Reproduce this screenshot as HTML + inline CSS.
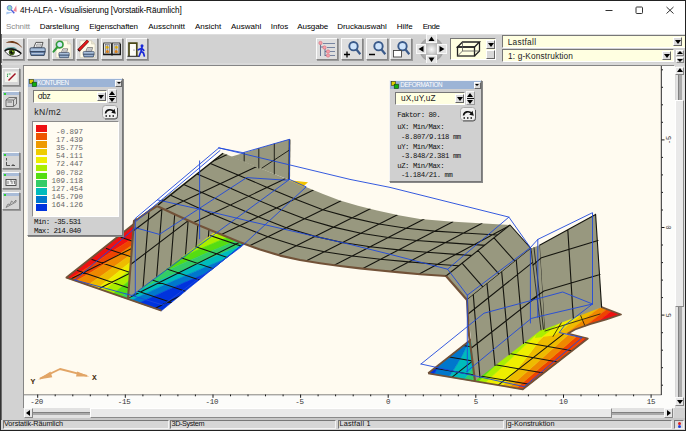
<!DOCTYPE html>
<html><head><meta charset="utf-8"><title>4H-ALFA - Visualisierung</title>
<style>
*{box-sizing:border-box;margin:0;padding:0}
html,body{width:686px;height:431px;overflow:hidden;background:#d2d2d2;font-family:"Liberation Sans",sans-serif;}
#w{position:absolute;left:0;top:0;width:686px;height:431px;overflow:hidden;background:#d2d2d2}
.abs{position:absolute}
#title{position:absolute;left:0;top:0;width:686px;height:21px;background:#fff;border-top:1px solid #444}
#title .t{position:absolute;left:20px;top:3px;font-size:12px;color:#000;letter-spacing:-0.1px;white-space:nowrap}
#menu{position:absolute;left:0;top:21px;width:686px;height:13px;background:#fff}
#menu span{position:absolute;top:-2px;font-size:11.5px;color:#000;white-space:nowrap;letter-spacing:-0.1px}
.btn{position:absolute;background:#dedede;border:1px solid;border-color:#fbfbfb #858585 #858585 #fbfbfb;box-shadow:1px 1px 0 #9a9a9a}
.fld{position:absolute;background:#ffffe1;border:1px solid;border-color:#777 #fff #fff #777;font-size:10.5px;color:#222;white-space:nowrap}
.panel{position:absolute;background:#d0d0d0;border:1px solid;border-color:#f4f4f4 #777 #777 #f4f4f4;box-shadow:1px 1px 0 #888}
.ptitle{position:absolute;left:0;top:0;right:0;height:10px;background:#9db5d6;color:#fff;font-size:8px;line-height:10px;white-space:nowrap;font-family:"Liberation Sans",sans-serif}
.mono{font-family:"Liberation Mono",monospace;white-space:pre;color:#222}
.sm{font-family:"Liberation Sans",sans-serif;white-space:pre;color:#222}
.dd{position:absolute;width:10px;height:9px;background:#dcdcdc;border:1px solid;border-color:#fff #666 #666 #fff}
.tri-d{position:absolute;width:0;height:0;border-left:3px solid transparent;border-right:3px solid transparent;border-top:4px solid #000}
.tri-u{position:absolute;width:0;height:0;border-left:3px solid transparent;border-right:3px solid transparent;border-bottom:4px solid #000}
.tri-l{position:absolute;width:0;height:0;border-top:3px solid transparent;border-bottom:3px solid transparent;border-right:4px solid #000}
.tri-r{position:absolute;width:0;height:0;border-top:3px solid transparent;border-bottom:3px solid transparent;border-left:4px solid #000}
</style></head>
<body><div id="w"><div id="title"><svg class="abs" style="left:0;top:-1px" width="20" height="20" viewBox="0 0 20 20">
<path d="M6.200 14.600 L6.500 11.800 L12.800 12.300 Z" fill="#a8c8f0"/>
<path d="M16.300 5.300 L13.200 11 L16.700 11.700 Z" fill="#f08494"/>
<path d="M11 9.600 L14.300 13.300" stroke="#4a5ad8" stroke-width="1.400"/>
<circle cx="9.600" cy="7.900" r="2.400" fill="#8fd8c0" stroke="#6a8ad8" stroke-width="1"/></svg></div><div class="abs" style="left:20.00px;top:6.10px;font-family:'Liberation Sans',sans-serif;font-weight:normal;font-size:8.2px;line-height:10.2px;letter-spacing:-0.095px;color:#000;white-space:pre;">4H-ALFA - Visualisierung [Vorstatik-Räumlich]</div><svg class="abs" style="left:596px;top:0" width="90" height="21" viewBox="0 0 90 21">
<path d="M9.500 10.500 H16.500" stroke="#333" stroke-width="1" fill="none"/>
<rect x="40" y="7" width="6.500" height="6.500" rx="0.800" stroke="#333" stroke-width="1" fill="none"/>
<path d="M70.500 7 L77.500 13.500 M77.500 7 L70.500 13.500" stroke="#333" stroke-width="1" fill="none"/></svg><div class="abs" style="left:0;top:20px;width:686px;height:14px;background:#fff"></div><div class="abs" style="left:6.00px;top:22.40px;font-family:'Liberation Sans',sans-serif;font-weight:normal;font-size:8px;line-height:10px;letter-spacing:-0.076px;color:#8a8a8a;white-space:pre;">Schnitt</div><div class="abs" style="left:39.70px;top:22.40px;font-family:'Liberation Sans',sans-serif;font-weight:normal;font-size:8px;line-height:10px;letter-spacing:-0.086px;color:#000;white-space:pre;">Darstellung</div><div class="abs" style="left:89.30px;top:22.40px;font-family:'Liberation Sans',sans-serif;font-weight:normal;font-size:8px;line-height:10px;letter-spacing:-0.167px;color:#000;white-space:pre;">Eigenschaften</div><div class="abs" style="left:148.30px;top:22.40px;font-family:'Liberation Sans',sans-serif;font-weight:normal;font-size:8px;line-height:10px;letter-spacing:-0.023px;color:#000;white-space:pre;">Ausschnitt</div><div class="abs" style="left:195.00px;top:22.40px;font-family:'Liberation Sans',sans-serif;font-weight:normal;font-size:8px;line-height:10px;letter-spacing:0.011px;color:#000;white-space:pre;">Ansicht</div><div class="abs" style="left:231.00px;top:22.40px;font-family:'Liberation Sans',sans-serif;font-weight:normal;font-size:8px;line-height:10px;letter-spacing:0.010px;color:#000;white-space:pre;">Auswahl</div><div class="abs" style="left:270.70px;top:22.40px;font-family:'Liberation Sans',sans-serif;font-weight:normal;font-size:8px;line-height:10px;letter-spacing:0.064px;color:#000;white-space:pre;">Infos</div><div class="abs" style="left:297.30px;top:22.40px;font-family:'Liberation Sans',sans-serif;font-weight:normal;font-size:8px;line-height:10px;letter-spacing:-0.097px;color:#000;white-space:pre;">Ausgabe</div><div class="abs" style="left:337.30px;top:22.40px;font-family:'Liberation Sans',sans-serif;font-weight:normal;font-size:8px;line-height:10px;letter-spacing:-0.076px;color:#000;white-space:pre;">Druckauswahl</div><div class="abs" style="left:396.70px;top:22.40px;font-family:'Liberation Sans',sans-serif;font-weight:normal;font-size:8px;line-height:10px;letter-spacing:-0.001px;color:#000;white-space:pre;">Hilfe</div><div class="abs" style="left:422.70px;top:22.40px;font-family:'Liberation Sans',sans-serif;font-weight:normal;font-size:8px;line-height:10px;letter-spacing:-0.461px;color:#000;white-space:pre;">Ende</div><div class="abs" style="left:0;top:34px;width:686px;height:1px;background:#dedede"></div><div class="abs" style="left:0;top:34px;width:1.500px;height:397px;background:#6a6a6a"></div><div class="btn" style="left:2px;top:38px;width:22px;height:22px"><svg class="abs" style="left:-1px;top:-1px" width="22" height="22" viewBox="0 0 22 22"><path d="M3.600 5 C6.500 2.400 11.500 2.200 15 4.600 C17.500 6.300 19.300 8.200 20.300 10 C18 7.800 15.500 6.200 12.500 5.300 C9.500 4.400 6.500 4.700 3.600 5 Z" fill="#6e3a18"/>
<path d="M2.600 11.500 C5 9.200 9 8.700 13 9.400 L15.500 11.500 C11 10.200 6.500 10.500 2.600 12.600 Z" fill="#6aa8a8"/>
<path d="M2.700 12.800 C6 10 13 9.800 19.200 15.500 C17.500 18.400 12 19 8 17.500 C5.500 16.500 3.800 14.500 2.700 12.800 Z" fill="#fbfbfb" stroke="#222" stroke-width="0.900"/>
<circle cx="9.800" cy="14.200" r="3" fill="#3c5a14"/><circle cx="9.800" cy="14.200" r="1.500" fill="#0a0a0a"/><circle cx="10.800" cy="13.400" r="0.900" fill="#8ab820"/>
<path d="M2.700 12.800 C6 10 13 9.800 19.200 15.500" fill="none" stroke="#111" stroke-width="1.500"/>
</svg></div><div class="btn" style="left:27px;top:38px;width:22px;height:22px"><svg class="abs" style="left:-1px;top:-1px" width="22" height="22" viewBox="0 0 22 22"><g transform="translate(0.5,0) scale(1.0)"><path d="M8.400 4.400 H15.500 L13.900 9.800 H6.200 Z" fill="#fafafa" stroke="#333" stroke-width="0.800"/>
<path d="M9.500 6 H13.800 L13 8.300 H8.600 Z" fill="#d8d8d8" stroke="#777" stroke-width="0.500"/>
<path d="M3.600 9.800 H16.800 Q17.700 9.800 17.700 11 V13.700 H2.500 V11 Q2.500 9.800 3.600 9.800 Z" fill="#a9c0dc" stroke="#2a3850" stroke-width="0.800"/>
<path d="M2.500 13.700 H17.700 L16.600 17.500 H3.600 Z" fill="#6a88b0" stroke="#2a3850" stroke-width="0.800"/>
<path d="M4 15.600 H16" stroke="#dfe8f4" stroke-width="0.700"/></g></svg></div><div class="btn" style="left:51.5px;top:38px;width:22px;height:22px"><svg class="abs" style="left:-1px;top:-1px" width="22" height="22" viewBox="0 0 22 22"><path d="M4 2.700 H15.500 L19 6 V19.700 H4 Z" fill="#fffbe8" stroke="#c8c4b0" stroke-width="0.600"/><path d="M15.500 2.700 V6 H19" fill="#e8e4d0" stroke="#c8c4b0" stroke-width="0.500"/><g transform="translate(5.2,7.8) scale(0.68)"><path d="M8.400 4.400 H15.500 L13.900 9.800 H6.200 Z" fill="#fafafa" stroke="#333" stroke-width="0.800"/>
<path d="M9.500 6 H13.800 L13 8.300 H8.600 Z" fill="#d8d8d8" stroke="#777" stroke-width="0.500"/>
<path d="M3.600 9.800 H16.800 Q17.700 9.800 17.700 11 V13.700 H2.500 V11 Q2.500 9.800 3.600 9.800 Z" fill="#a9c0dc" stroke="#2a3850" stroke-width="0.800"/>
<path d="M2.500 13.700 H17.700 L16.600 17.500 H3.600 Z" fill="#6a88b0" stroke="#2a3850" stroke-width="0.800"/>
<path d="M4 15.600 H16" stroke="#dfe8f4" stroke-width="0.700"/></g><circle cx="7.700" cy="6.600" r="3.300" fill="#d4e8fb" stroke="#2f9a3a" stroke-width="1.600"/>
<path d="M5.300 9.200 L1.500 13.600" stroke="#2f9a3a" stroke-width="2.100" stroke-linecap="round"/></svg></div><div class="btn" style="left:76px;top:38px;width:22px;height:22px"><svg class="abs" style="left:-1px;top:-1px" width="22" height="22" viewBox="0 0 22 22"><path d="M4 2.700 H15.500 L19 6 V19.700 H4 Z" fill="#fffbe8" stroke="#c8c4b0" stroke-width="0.600"/><path d="M15.500 2.700 V6 H19" fill="#e8e4d0" stroke="#c8c4b0" stroke-width="0.500"/><g transform="translate(5.4,6.4) scale(0.72)"><path d="M8.400 4.400 H15.500 L13.900 9.800 H6.200 Z" fill="#fafafa" stroke="#333" stroke-width="0.800"/>
<path d="M9.500 6 H13.800 L13 8.300 H8.600 Z" fill="#d8d8d8" stroke="#777" stroke-width="0.500"/>
<path d="M3.600 9.800 H16.800 Q17.700 9.800 17.700 11 V13.700 H2.500 V11 Q2.500 9.800 3.600 9.800 Z" fill="#a9c0dc" stroke="#2a3850" stroke-width="0.800"/>
<path d="M2.500 13.700 H17.700 L16.600 17.500 H3.600 Z" fill="#6a88b0" stroke="#2a3850" stroke-width="0.800"/>
<path d="M4 15.600 H16" stroke="#dfe8f4" stroke-width="0.700"/></g><path d="M2.400 12.600 L12 2.800" stroke="#4a0a0a" stroke-width="3"/><path d="M3 12 L12 2.800" stroke="#e81818" stroke-width="2"/>
<path d="M1.800 13.300 L3.800 12.600 L2.600 11.400 Z" fill="#111"/></svg></div><div class="btn" style="left:101px;top:38px;width:22px;height:22px"><svg class="abs" style="left:-1px;top:-1px" width="22" height="22" viewBox="0 0 22 22"><path d="M2 5.800 H20 V17.300 H11.800 L11 18 L10.200 17.300 H2 Z" fill="#1a1a1a"/>
<rect x="2.700" y="5" width="7.600" height="11" fill="#fdfdf6" stroke="#1a1a1a" stroke-width="0.800"/>
<rect x="11.300" y="5" width="7.600" height="11" fill="#fdfdf6" stroke="#1a1a1a" stroke-width="0.800"/>
<rect x="4.300" y="6.200" width="4.300" height="8.800" fill="#c4cce0" stroke="#555" stroke-width="0.500"/>
<rect x="13" y="6.200" width="4.300" height="8.800" fill="#c4cce0" stroke="#555" stroke-width="0.500"/>
<circle cx="6.200" cy="9.200" r="1.500" fill="#ffc400"/><circle cx="6.400" cy="13.400" r="1.500" fill="#ff8a00"/>
<circle cx="15.400" cy="9.200" r="1.500" fill="#ffc400"/><circle cx="15.200" cy="13.400" r="1.500" fill="#ff8a00"/>
<path d="M6.400 7 V15 M15.200 7 V15" stroke="#666" stroke-width="0.500"/></svg></div><div class="btn" style="left:126px;top:38px;width:22px;height:22px"><svg class="abs" style="left:-1px;top:-1px" width="22" height="22" viewBox="0 0 22 22"><path d="M3 18 V5.200 H10.800 V18" fill="#fcfcf8" stroke="#4a4818" stroke-width="1.700"/>
<path d="M1.500 18.300 H13.500" stroke="#222" stroke-width="1"/><circle cx="8" cy="12" r="0.600" fill="#555"/>
<circle cx="16" cy="7.800" r="1.500" fill="#1a2ad8"/>
<path d="M16 9.300 L15 13.300 L13.300 17.800 M15 13.300 L17.500 15 L18.300 18 M15.600 10.300 L12.300 11.800 M15.800 10.300 L17.800 12.300" stroke="#1a2ad8" stroke-width="1.700" fill="none" stroke-linecap="round" stroke-linejoin="round"/></svg></div><div class="btn" style="left:316px;top:38px;width:22px;height:22px"><svg class="abs" style="left:0;top:0" width="20" height="20" viewBox="0 0 20 20">
<path d="M3.500 4 V17 M8 8 V17 M8 12.500 H11 M8 16.500 H11 M3.500 8 H7" stroke="#5a6a8a" stroke-width="0.900" fill="none"/>
<path d="M6 4.500 H18 M10 8.500 H18 M13 12.500 H18 M13 16.500 H18" stroke="#6a7a9a" stroke-width="0.900"/>
<circle cx="3.500" cy="4" r="1.700" fill="#f8a0a8" stroke="#d06070" stroke-width="0.500"/>
<circle cx="7.500" cy="8.500" r="1.700" fill="#f8a0a8" stroke="#d06070" stroke-width="0.500"/>
<circle cx="11" cy="12.500" r="1.700" fill="#f8a0a8" stroke="#d06070" stroke-width="0.500"/>
<circle cx="11" cy="16.500" r="1.700" fill="#f8a0a8" stroke="#d06070" stroke-width="0.500"/></svg></div><div class="btn" style="left:341px;top:38px;width:22px;height:22px"><svg class="abs" style="left:0;top:0" width="20" height="20" viewBox="0 0 20 20"><circle cx="11.500" cy="7.200" r="4.200" fill="#cfe4fb" stroke="#3a5a8a" stroke-width="1.900"/><path d="M14.500 10.500 L18.300 15.200" stroke="#3a5a8a" stroke-width="2.200"/><path d="M2 15.500 H8 M5 12.500 V18.500" stroke="#000" stroke-width="1.300"/></svg></div><div class="btn" style="left:365.5px;top:38px;width:22px;height:22px"><svg class="abs" style="left:0;top:0" width="20" height="20" viewBox="0 0 20 20"><circle cx="11.500" cy="7.200" r="4.200" fill="#cfe4fb" stroke="#3a5a8a" stroke-width="1.900"/><path d="M14.500 10.500 L18.300 15.200" stroke="#3a5a8a" stroke-width="2.200"/><path d="M2 15.500 H8" stroke="#000" stroke-width="1.500"/></svg></div><div class="btn" style="left:390px;top:38px;width:22px;height:22px"><svg class="abs" style="left:0;top:0" width="20" height="20" viewBox="0 0 20 20"><circle cx="11.500" cy="7.200" r="4.200" fill="#cfe4fb" stroke="#3a5a8a" stroke-width="1.900"/><path d="M14.500 10.500 L18.300 15.200" stroke="#3a5a8a" stroke-width="2.200"/><rect x="2.500" y="11.500" width="8" height="6.500" fill="#fff" stroke="#444" stroke-width="0.900"/></svg></div><svg class="abs" style="left:415.500px;top:34px" width="32" height="31" viewBox="0 0 32 31">
<defs><radialGradient id="ng" cx="50%" cy="50%" r="50%"><stop offset="0" stop-color="#fafafa"/><stop offset="0.450" stop-color="#c4c4c4"/><stop offset="1" stop-color="#9c9c9c"/></radialGradient></defs>
<circle cx="15.500" cy="15.500" r="12" fill="url(#ng)"/>
<rect x="10.500" y="0.500" width="10" height="8" fill="#e4e4e4" stroke="#f8f8f8" stroke-width="1"/>
<rect x="10.500" y="21.500" width="10" height="8" fill="#e4e4e4" stroke="#f8f8f8" stroke-width="1"/>
<rect x="0.500" y="10.500" width="9" height="9" fill="#e4e4e4" stroke="#f8f8f8" stroke-width="1"/>
<rect x="21.500" y="10.500" width="9" height="9" fill="#e4e4e4" stroke="#f8f8f8" stroke-width="1"/>
<path d="M15.500 2.500 L18.500 7 H12.500 Z" fill="#000"/><path d="M15.500 28 L18.500 23.500 H12.500 Z" fill="#000"/>
<path d="M2.500 15 L7.500 12 V18 Z" fill="#000"/><path d="M28.500 15 L23.500 12 V18 Z" fill="#000"/>
</svg><div class="fld" style="left:450px;top:38px;width:46px;height:22px"></div>
<svg class="abs" style="left:452px;top:39px" width="32" height="20" viewBox="0 0 32 20">
<g fill="none" stroke="#222" stroke-width="1.300">
<path d="M5.500 8 L10.500 3 H27.500 L22.500 8 Z"/><rect x="5.500" y="8" width="17" height="9"/>
<path d="M27.500 3 V12 L22.500 17"/></g>
<g fill="none" stroke="#555" stroke-width="0.800"><path d="M10.500 3 V12 H27.500 M10.500 12 L5.500 17"/></g></svg>
<div class="dd" style="left:486px;top:40px;height:9px;width:9px"></div><div class="tri-d" style="left:487.500px;top:43px"></div>
<div class="dd" style="left:486px;top:50px;height:9px;width:9px;background:#d8d8d8"></div><div class="fld" style="left:502px;top:35px;width:184px;height:13px"></div><div class="abs" style="left:507.70px;top:36.65px;font-family:'Liberation Sans',sans-serif;font-weight:normal;font-size:8.3px;line-height:10.3px;letter-spacing:0.286px;color:#222;white-space:pre;">Lastfall</div><div class="dd" style="left:673px;top:37px;width:9px"></div><div class="tri-d" style="left:674.500px;top:40px"></div><div class="fld" style="left:502px;top:49px;width:172px;height:13px"></div><div class="abs" style="left:508.00px;top:50.65px;font-family:'Liberation Sans',sans-serif;font-weight:normal;font-size:8.3px;line-height:10.3px;letter-spacing:0.141px;color:#222;white-space:pre;">1: g-Konstruktion</div><div class="dd" style="left:662px;top:51px;width:9px"></div><div class="tri-d" style="left:663.500px;top:54px"></div><div class="dd" style="left:675.500px;top:49.500px;height:6.500px;width:8.500px;border-color:#fff #888 #888 #fff"></div><div class="tri-u" style="left:677px;top:50.500px;border-bottom-width:3.500px"></div><div class="dd" style="left:675.500px;top:56.500px;height:6.500px;width:8.500px;border-color:#fff #888 #888 #fff"></div><div class="tri-d" style="left:677px;top:58.500px;border-top-width:3.500px"></div><div class="abs" style="left:23px;top:64.500px;width:1.200px;height:343.500px;background:#858585"></div><div class="abs" style="left:23px;top:64.500px;width:651px;height:1.200px;background:#858585"></div><div class="abs" style="left:0;top:63px;width:686px;height:1.500px;background:#d9d9d9"></div><div class="btn" style="left:2px;top:67.5px;width:18px;height:18px;background:#d6d6d6"><svg class="abs" style="left:0;top:0" width="16" height="16" viewBox="0 0 16 16"><rect x="2" y="2.500" width="12.500" height="10.500" fill="#f4f4ee"/>
<path d="M5.500 11.500 L12.500 4.500" stroke="#a01020" stroke-width="1.500"/><path d="M4.500 8 V5 H7.500" stroke="#2a9a4a" stroke-width="1" fill="none" stroke-dasharray="1.500 0.800"/></svg></div><div class="btn" style="left:2px;top:91px;width:18px;height:18px;background:#d6d6d6"><div class="abs" style="left:0;top:0;width:16px;height:3px;background:#a9bcd8"></div><div class="abs" style="left:1px;top:0.500px;width:2px;height:2px;background:#3c3"></div><svg class="abs" style="left:1px;top:3px" width="14" height="13" viewBox="0 0 14 13"><g fill="none" stroke="#666" stroke-width="0.900">
<path d="M2 5 L5 2.500 H12.500 V9 L9.500 11.500 H2 Z M2 5 H9.500 V11.500 M9.500 5 L12.500 2.500 M3.500 7 H8"/></g></svg></div><div class="btn" style="left:2px;top:152px;width:18px;height:17px;background:#d6d6d6"><div class="abs" style="left:0;top:0;width:16px;height:3px;background:#a9bcd8"></div><div class="abs" style="left:1px;top:0.500px;width:2px;height:2px;background:#3c3"></div><svg class="abs" style="left:1px;top:3px" width="14" height="12" viewBox="0 0 14 12"><g fill="none" stroke="#444" stroke-width="0.900">
<path d="M2.500 2 V4.500 M2.500 6 V9.500 H6 M7.500 9.500 H11 M9 8 V9.500"/></g></svg></div><div class="btn" style="left:2px;top:172px;width:18px;height:17px;background:#d6d6d6"><div class="abs" style="left:0;top:0;width:16px;height:3px;background:#a9bcd8"></div><div class="abs" style="left:1px;top:0.500px;width:2px;height:2px;background:#3c3"></div><svg class="abs" style="left:1px;top:3px" width="14" height="12" viewBox="0 0 14 12"><rect x="2" y="3.500" width="10" height="6" fill="#f0f0f0" stroke="#444" stroke-width="0.900"/><path d="M4 5 V8 M6 5 H8 V8 M9.500 5 H10.500 V8" stroke="#555" stroke-width="0.700" fill="none"/></svg></div><div class="btn" style="left:2px;top:192px;width:18px;height:18px;background:#d6d6d6"><div class="abs" style="left:0;top:0;width:16px;height:3px;background:#a9bcd8"></div><div class="abs" style="left:1px;top:0.500px;width:2px;height:2px;background:#3c3"></div><svg class="abs" style="left:1px;top:3px" width="14" height="13" viewBox="0 0 14 13"><path d="M2 11.500 L4 8 L6 8.500 L7.500 5 L9.500 6.500 L12 4 L12 6 L2 11.500 Z" fill="#c8c8c8" stroke="#777" stroke-width="0.800"/></svg></div><div class="abs" style="left:24px;top:66px;width:637px;height:329px;background:#fffbf0;overflow:hidden"></div><svg class="abs" style="left:0;top:0" width="686" height="431" viewBox="0 0 686 431"><defs><clipPath id="cv"><rect x="24" y="66" width="637" height="329"/></clipPath></defs><g clip-path="url(#cv)"><g><polygon points="66.5,277.6 72.8,272.6 79.0,267.7 85.2,262.7 91.5,257.7 97.8,252.7 104.0,247.8 110.2,242.8 116.5,237.8 122.8,232.8 129.0,227.9 135.2,222.9 141.5,217.9 147.8,212.9 154.0,208.0 160.2,203.0 166.5,198.0 182.8,203.2 176.1,208.1 169.4,212.9 162.6,217.8 155.8,222.6 148.9,227.4 142.0,232.1 135.0,236.9 127.9,241.6 120.4,246.2 113.1,250.8 106.0,255.5 98.9,260.2 91.7,264.9 84.5,269.5 77.2,274.2 69.8,278.8" fill="#ee1111" stroke="#ee1111" stroke-width="0.6" stroke-linejoin="round"/><polygon points="69.8,278.8 77.2,274.2 84.5,269.5 91.7,264.9 98.9,260.2 106.0,255.5 113.1,250.8 120.4,246.2 127.9,241.6 135.0,236.9 142.0,232.1 148.9,227.4 155.8,222.6 162.6,217.8 169.4,212.9 176.1,208.1 182.8,203.2 188.7,205.1 182.1,210.0 175.4,214.9 168.6,219.7 161.9,224.5 155.0,229.4 148.2,234.2 141.3,239.0 134.3,243.7 127.3,248.5 120.4,253.3 113.5,258.1 106.4,262.8 99.1,267.4 91.7,272.0 84.0,276.5 76.0,280.9" fill="#ee4400" stroke="#ee4400" stroke-width="0.6" stroke-linejoin="round"/><polygon points="76.0,280.9 84.0,276.5 91.7,272.0 99.1,267.4 106.4,262.8 113.5,258.1 120.4,253.3 127.3,248.5 134.3,243.7 141.3,239.0 148.2,234.2 155.0,229.4 161.9,224.5 168.6,219.7 175.4,214.9 182.1,210.0 188.7,205.1 193.9,206.7 187.4,211.7 181.0,216.7 174.5,221.6 168.0,226.6 161.5,231.5 155.0,236.4 148.5,241.4 141.9,246.3 135.3,251.2 128.7,256.1 122.0,260.9 115.3,265.8 108.5,270.7 101.8,275.5 94.9,280.3 88.0,285.1" fill="#ee8800" stroke="#ee8800" stroke-width="0.6" stroke-linejoin="round"/><polygon points="88.0,285.1 94.9,280.3 101.8,275.5 108.5,270.7 115.3,265.8 122.0,260.9 128.7,256.1 135.3,251.2 141.9,246.3 148.5,241.4 155.0,236.4 161.5,231.5 168.0,226.6 174.5,221.6 181.0,216.7 187.4,211.7 193.9,206.7 198.6,208.2 192.3,213.2 185.9,218.3 179.6,223.3 173.3,228.3 167.0,233.3 160.7,238.3 154.3,243.3 148.0,248.3 141.7,253.3 135.4,258.3 129.1,263.3 122.7,268.3 116.4,273.4 110.1,278.4 103.7,283.4 97.4,288.4" fill="#eebb00" stroke="#eebb00" stroke-width="0.6" stroke-linejoin="round"/><polygon points="97.4,288.4 103.7,283.4 110.1,278.4 116.4,273.4 122.7,268.3 129.1,263.3 135.4,258.3 141.7,253.3 148.0,248.3 154.3,243.3 160.7,238.3 167.0,233.3 173.3,228.3 179.6,223.3 185.9,218.3 192.3,213.2 198.6,208.2 204.3,210.1 198.0,215.1 191.8,220.1 185.5,225.2 179.2,230.2 172.9,235.2 166.7,240.3 160.4,245.3 154.1,250.4 147.9,255.4 141.6,260.4 135.3,265.5 129.0,270.5 122.8,275.5 116.5,280.6 110.2,285.6 104.0,290.6" fill="#eeee00" stroke="#eeee00" stroke-width="0.6" stroke-linejoin="round"/><polygon points="104.0,290.6 110.2,285.6 116.5,280.6 122.8,275.5 129.0,270.5 135.3,265.5 141.6,260.4 147.9,255.4 154.1,250.4 160.4,245.3 166.7,240.3 172.9,235.2 179.2,230.2 185.5,225.2 191.8,220.1 198.0,215.1 204.3,210.1 213.3,212.9 207.1,218.0 200.8,223.1 194.5,228.1 188.3,233.2 182.0,238.2 175.7,243.3 169.5,248.3 163.2,253.4 156.9,258.4 150.7,263.5 144.4,268.5 138.1,273.6 131.8,278.7 125.6,283.7 119.3,288.8 113.0,293.8" fill="#aaee00" stroke="#aaee00" stroke-width="0.6" stroke-linejoin="round"/><polygon points="113.0,293.8 119.3,288.8 125.6,283.7 131.8,278.7 138.1,273.6 144.4,268.5 150.7,263.5 156.9,258.4 163.2,253.4 169.5,248.3 175.7,243.3 182.0,238.2 188.3,233.2 194.5,228.1 200.8,223.1 207.1,218.0 213.3,212.9 222.0,215.7 215.7,220.8 209.5,225.8 203.2,230.9 196.9,236.0 190.6,241.1 184.4,246.1 178.1,251.2 171.8,256.3 165.5,261.3 159.3,266.4 153.0,271.5 146.7,276.5 140.5,281.6 134.2,286.7 127.9,291.7 121.6,296.8" fill="#55dd11" stroke="#55dd11" stroke-width="0.6" stroke-linejoin="round"/><polygon points="121.6,296.8 127.9,291.7 134.2,286.7 140.5,281.6 146.7,276.5 153.0,271.5 159.3,266.4 165.5,261.3 171.8,256.3 178.1,251.2 184.4,246.1 190.6,241.1 196.9,236.0 203.2,230.9 209.5,225.8 215.7,220.8 222.0,215.7 229.4,218.1 223.1,223.1 216.8,228.2 210.6,233.3 204.3,238.4 198.0,243.5 191.7,248.6 185.5,253.6 179.2,258.7 172.9,263.8 166.6,268.9 160.4,274.0 154.1,279.0 147.8,284.1 141.5,289.2 135.3,294.3 129.0,299.4" fill="#33cc66" stroke="#33cc66" stroke-width="0.6" stroke-linejoin="round"/><polygon points="129.0,299.4 135.3,294.3 141.5,289.2 147.8,284.1 154.1,279.0 160.4,274.0 166.6,268.9 172.9,263.8 179.2,258.7 185.5,253.6 191.7,248.6 198.0,243.5 204.3,238.4 210.6,233.3 216.8,228.2 223.1,223.1 229.4,218.1 229.6,218.1 223.3,223.2 217.0,228.3 210.8,233.4 204.5,238.5 198.2,243.5 191.9,248.6 185.7,253.7 179.4,258.8 173.1,263.9 166.8,269.0 160.6,274.0 154.3,279.1 148.0,284.2 141.7,289.3 135.5,294.4 129.2,299.4" fill="#00bbbb" stroke="#00bbbb" stroke-width="0.6" stroke-linejoin="round"/><polygon points="129.2,299.4 135.5,294.4 141.7,289.3 148.0,284.2 154.3,279.1 160.6,274.0 166.8,269.0 173.1,263.9 179.4,258.8 185.7,253.7 191.9,248.6 198.2,243.5 204.5,238.5 210.8,233.4 217.0,228.3 223.3,223.2 229.6,218.1 234.7,219.8 225.1,223.8 217.0,228.3 210.8,233.4 204.5,238.5 198.2,243.5 191.9,248.6 185.7,253.7 179.4,258.8 173.1,263.9 166.8,269.0 160.6,274.0 154.3,279.1 148.0,284.2 141.7,289.3 135.5,294.4 129.2,299.4" fill="#eebb00" stroke="#eebb00" stroke-width="0.6" stroke-linejoin="round"/><polygon points="129.2,299.4 135.5,294.4 141.7,289.3 148.0,284.2 154.3,279.1 160.6,274.0 166.8,269.0 173.1,263.9 179.4,258.8 185.7,253.7 191.9,248.6 198.2,243.5 204.5,238.5 210.8,233.4 217.0,228.3 225.1,223.8 234.7,219.8 245.0,223.0 235.1,227.0 225.4,231.0 215.9,235.0 206.4,239.1 198.2,243.5 191.9,248.6 185.7,253.7 179.4,258.8 173.1,263.9 166.8,269.0 160.6,274.0 154.3,279.1 148.0,284.2 141.7,289.3 135.5,294.4 129.2,299.4" fill="#eeee00" stroke="#eeee00" stroke-width="0.6" stroke-linejoin="round"/><polygon points="129.2,299.4 135.5,294.4 141.7,289.3 148.0,284.2 154.3,279.1 160.6,274.0 166.8,269.0 173.1,263.9 179.4,258.8 185.7,253.7 191.9,248.6 198.2,243.5 206.4,239.1 215.9,235.0 225.4,231.0 235.1,227.0 245.0,223.0 255.3,226.3 245.2,230.2 235.3,234.2 225.5,238.2 215.9,242.2 206.4,246.2 197.0,250.3 187.7,254.4 179.4,258.8 173.1,263.9 166.8,269.0 160.6,274.0 154.3,279.1 148.0,284.2 141.7,289.3 135.5,294.4 129.2,299.4" fill="#aaee00" stroke="#aaee00" stroke-width="0.6" stroke-linejoin="round"/><polygon points="129.2,299.4 135.5,294.4 141.7,289.3 148.0,284.2 154.3,279.1 160.6,274.0 166.8,269.0 173.1,263.9 179.4,258.8 187.7,254.4 197.0,250.3 206.4,246.2 215.9,242.2 225.5,238.2 235.3,234.2 245.2,230.2 255.3,226.3 262.1,228.5 255.3,233.5 245.2,237.4 235.2,241.3 225.4,245.3 215.7,249.3 206.1,253.3 196.7,257.4 187.4,261.4 178.2,265.6 169.0,269.7 160.6,274.0 154.3,279.1 148.0,284.2 141.7,289.3 135.5,294.4 129.2,299.4" fill="#55dd11" stroke="#55dd11" stroke-width="0.6" stroke-linejoin="round"/><polygon points="129.2,299.4 135.5,294.4 141.7,289.3 148.0,284.2 154.3,279.1 160.6,274.0 169.0,269.7 178.2,265.6 187.4,261.4 196.7,257.4 206.1,253.3 215.7,249.3 225.4,245.3 235.2,241.3 245.2,237.4 255.3,233.5 262.1,228.5 262.1,228.5 255.8,233.6 249.5,238.8 243.2,243.9 234.9,248.4 225.0,252.3 215.3,256.3 205.7,260.3 196.2,264.4 186.8,268.5 177.5,272.6 168.4,276.7 159.3,280.8 150.3,285.0 141.7,289.3 135.5,294.4 129.2,299.4" fill="#33cc66" stroke="#33cc66" stroke-width="0.6" stroke-linejoin="round"/><polygon points="129.2,299.4 135.5,294.4 141.7,289.3 150.3,285.0 159.3,280.8 168.4,276.7 177.5,272.6 186.8,268.5 196.2,264.4 205.7,260.3 215.3,256.3 225.0,252.3 234.9,248.4 243.2,243.9 249.5,238.8 255.8,233.6 262.1,228.5 262.1,228.5 255.8,233.6 249.5,238.8 243.2,243.9 237.0,249.1 230.7,254.2 224.4,259.3 214.6,263.3 205.0,267.3 195.5,271.4 186.0,275.4 176.7,279.5 167.5,283.6 158.4,287.8 149.4,291.9 140.5,296.1 131.6,300.3" fill="#00bbbb" stroke="#00bbbb" stroke-width="0.6" stroke-linejoin="round"/><polygon points="131.6,300.3 140.5,296.1 149.4,291.9 158.4,287.8 167.5,283.6 176.7,279.5 186.0,275.4 195.5,271.4 205.0,267.3 214.6,263.3 224.4,259.3 230.7,254.2 237.0,249.1 243.2,243.9 249.5,238.8 255.8,233.6 262.1,228.5 262.1,228.5 255.8,233.6 249.5,238.8 243.2,243.9 237.0,249.1 230.7,254.2 224.4,259.3 218.1,264.5 211.8,269.6 204.1,274.3 194.5,278.3 185.1,282.3 175.7,286.4 166.5,290.5 157.3,294.7 148.3,298.8 139.3,303.0" fill="#0077cc" stroke="#0077cc" stroke-width="0.6" stroke-linejoin="round"/><polygon points="139.3,303.0 148.3,298.8 157.3,294.7 166.5,290.5 175.7,286.4 185.1,282.3 194.5,278.3 204.1,274.3 211.8,269.6 218.1,264.5 224.4,259.3 230.7,254.2 237.0,249.1 243.2,243.9 249.5,238.8 255.8,233.6 262.1,228.5 262.1,228.5 255.8,233.6 249.5,238.8 243.2,243.9 237.0,249.1 230.7,254.2 224.4,259.3 218.1,264.5 211.8,269.6 205.5,274.7 199.2,279.9 192.9,285.0 186.7,290.1 180.4,295.3 174.1,300.4 167.8,305.6 161.5,310.7" fill="#0033dd" stroke="#0033dd" stroke-width="0.6" stroke-linejoin="round"/></g><clipPath id="lfc"><polygon points="66.5,277.6 161.5,310.7 262.1,228.5 166.5,198.0"/></clipPath><g clip-path="url(#lfc)"><path d="M77.4 270.6 L227.4 321.6 M91.9 259.5 L241.9 310.5 M106.4 248.4 L256.4 299.4 M120.9 237.3 L270.9 288.3 M135.4 226.2 L285.4 277.2 M149.9 215.1 L299.9 266.1 M164.4 204.0 L314.4 255.0 M178.9 192.9 L328.9 243.9 M193.4 181.8 L343.4 232.8 M207.9 170.7 L357.9 221.7 M222.4 159.6 L372.4 210.6 M236.9 148.5 L386.9 199.5 M251.4 137.4 L401.4 188.4 M70.7 279.0 L270.7 179.0 M98.8 288.8 L298.8 188.8 M126.9 298.7 L326.9 198.7 M155.0 308.5 L355.0 208.5 M183.1 318.3 L383.1 218.3 M211.2 328.2 L411.2 228.2 M239.3 338.0 L439.3 238.0 M267.4 347.8 L467.4 247.8" fill="none" stroke="#15150f" stroke-width="1.05" stroke-linejoin="round" stroke-linecap="round"/></g><polyline points="166.5,198.0 66.5,277.6 161.5,310.7" fill="none" stroke="#725238" stroke-width="1.9" stroke-linejoin="round"/><g><polygon points="522.8,389.3 526.9,386.1 530.9,382.9 535.0,379.8 539.0,376.6 543.1,373.4 547.2,370.2 551.2,367.1 555.3,363.9 559.4,360.7 563.2,357.5 566.9,354.3 570.6,351.0 574.2,347.8 577.9,344.5 581.5,341.3 585.2,338.0 587.8,338.5 583.7,341.7 579.7,344.9 575.6,348.0 571.5,351.2 567.5,354.4 563.4,357.6 559.4,360.7 555.3,363.9 551.2,367.1 547.2,370.2 543.1,373.4 539.0,376.6 535.0,379.8 530.9,382.9 526.9,386.1 522.8,389.3" fill="#ee1111" stroke="#ee1111" stroke-width="0.6" stroke-linejoin="round"/><polygon points="516.2,388.2 520.0,385.0 523.7,381.7 527.5,378.5 531.3,375.3 535.1,372.1 538.8,368.8 542.6,365.6 546.4,362.4 550.1,359.1 553.9,355.9 557.6,352.7 561.4,349.4 565.1,346.2 568.8,343.0 572.6,339.7 576.3,336.5 585.2,338.0 581.5,341.3 577.9,344.5 574.2,347.8 570.6,351.0 566.9,354.3 563.2,357.5 559.4,360.7 555.3,363.9 551.2,367.1 547.2,370.2 543.1,373.4 539.0,376.6 535.0,379.8 530.9,382.9 526.9,386.1 522.8,389.3" fill="#ee4400" stroke="#ee4400" stroke-width="0.6" stroke-linejoin="round"/><polygon points="509.6,387.1 513.3,383.8 516.9,380.6 520.6,377.3 524.3,374.1 528.0,370.8 531.6,367.6 535.3,364.3 538.9,361.1 542.6,357.8 546.2,354.6 549.8,351.3 553.5,348.1 557.1,344.8 560.7,341.5 564.3,338.3 567.9,335.0 576.3,336.5 572.6,339.7 568.8,343.0 565.1,346.2 561.4,349.4 557.6,352.7 553.9,355.9 550.1,359.1 546.4,362.4 542.6,365.6 538.8,368.8 535.1,372.1 531.3,375.3 527.5,378.5 523.7,381.7 520.0,385.0 516.2,388.2" fill="#ee8800" stroke="#ee8800" stroke-width="0.6" stroke-linejoin="round"/><polygon points="502.0,385.8 505.1,382.4 508.1,379.1 511.1,375.7 514.1,372.3 517.0,369.0 519.9,365.6 522.7,362.2 525.4,358.8 528.2,355.3 530.8,351.9 533.4,348.5 535.9,345.0 538.3,341.6 541.5,338.2 545.0,334.9 548.5,331.6 567.9,335.0 564.3,338.3 560.7,341.5 557.1,344.8 553.5,348.1 549.8,351.3 546.2,354.6 542.6,357.8 538.9,361.1 535.3,364.3 531.6,367.6 528.0,370.8 524.3,374.1 520.6,377.3 516.9,380.6 513.3,383.8 509.6,387.1" fill="#eebb00" stroke="#eebb00" stroke-width="0.6" stroke-linejoin="round"/><polygon points="484.9,382.9 488.5,379.6 492.0,376.3 495.6,373.1 499.1,369.8 502.6,366.5 506.1,363.2 509.6,359.9 513.1,356.6 516.6,353.3 520.0,350.1 523.5,346.8 526.9,343.5 530.4,340.2 533.8,336.9 537.2,333.6 540.6,330.3 548.5,331.6 545.0,334.9 541.5,338.2 538.3,341.6 535.9,345.0 533.4,348.5 530.8,351.9 528.2,355.3 525.4,358.8 522.7,362.2 519.9,365.6 517.0,369.0 514.1,372.3 511.1,375.7 508.1,379.1 505.1,382.4 502.0,385.8" fill="#eeee00" stroke="#eeee00" stroke-width="0.6" stroke-linejoin="round"/><polygon points="478.0,381.7 481.5,378.4 485.0,375.2 488.5,371.9 492.0,368.6 495.4,365.3 498.9,362.0 502.4,358.7 506.0,355.4 509.5,352.1 513.0,348.8 516.5,345.6 519.9,342.2 523.2,338.9 526.5,335.6 529.8,332.3 533.1,328.9 540.6,330.3 537.2,333.6 533.8,336.9 530.4,340.2 526.9,343.5 523.5,346.8 520.0,350.1 516.6,353.3 513.1,356.6 509.6,359.9 506.1,363.2 502.6,366.5 499.1,369.8 495.6,373.1 492.0,376.3 488.5,379.6 484.9,382.9" fill="#aaee00" stroke="#aaee00" stroke-width="0.6" stroke-linejoin="round"/><polygon points="471.7,380.7 475.1,377.3 478.4,374.0 481.8,370.7 485.2,367.4 488.5,364.1 491.9,360.8 495.2,357.5 498.5,354.1 501.8,350.8 505.1,347.5 507.6,344.0 509.8,340.5 512.0,337.0 514.0,333.4 516.0,329.9 517.8,326.3 533.1,328.9 529.8,332.3 526.5,335.6 523.2,338.9 519.9,342.2 516.5,345.6 513.0,348.8 509.5,352.1 506.0,355.4 502.4,358.7 498.9,362.0 495.4,365.3 492.0,368.6 488.5,371.9 485.0,375.2 481.5,378.4 478.0,381.7" fill="#55dd11" stroke="#55dd11" stroke-width="0.6" stroke-linejoin="round"/><polygon points="464.2,379.4 466.8,375.9 469.3,372.5 471.7,369.0 474.1,365.5 476.5,362.0 478.8,358.5 481.0,355.0 483.2,351.5 485.2,348.0 487.2,344.4 489.2,340.8 491.0,337.2 492.7,333.6 494.4,330.0 495.9,326.4 497.4,322.7 517.8,326.3 516.0,329.9 514.0,333.4 512.0,337.0 509.8,340.5 507.6,344.0 505.1,347.5 501.8,350.8 498.5,354.1 495.2,357.5 491.9,360.8 488.5,364.1 485.2,367.4 481.8,370.7 478.4,374.0 475.1,377.3 471.7,380.7" fill="#33cc66" stroke="#33cc66" stroke-width="0.6" stroke-linejoin="round"/><polygon points="449.0,376.8 451.3,373.3 453.6,369.8 455.8,366.3 457.9,362.8 460.0,359.2 462.0,355.7 463.9,352.1 465.7,348.5 467.5,344.9 469.2,341.3 473.0,338.0 477.1,334.8 481.2,331.6 485.2,328.4 489.3,325.2 493.4,322.0 497.4,322.7 495.9,326.4 494.4,330.0 492.7,333.6 491.0,337.2 489.2,340.8 487.2,344.4 485.2,348.0 483.2,351.5 481.0,355.0 478.8,358.5 476.5,362.0 474.1,365.5 471.7,369.0 469.3,372.5 466.8,375.9 464.2,379.4" fill="#00bbbb" stroke="#00bbbb" stroke-width="0.6" stroke-linejoin="round"/><polygon points="433.9,374.3 435.9,370.7 437.9,367.2 440.4,363.7 444.5,360.5 448.6,357.3 452.6,354.1 456.7,350.9 460.8,347.6 464.9,344.4 468.9,341.2 473.0,338.0 477.1,334.8 481.2,331.6 485.2,328.4 489.3,325.2 493.4,322.0 493.4,322.0 489.3,325.2 485.2,328.4 481.2,331.6 477.1,334.8 473.0,338.0 469.2,341.3 467.5,344.9 465.7,348.5 463.9,352.1 462.0,355.7 460.0,359.2 457.9,362.8 455.8,366.3 453.6,369.8 451.3,373.3 449.0,376.8" fill="#0077cc" stroke="#0077cc" stroke-width="0.6" stroke-linejoin="round"/><polygon points="428.2,373.3 432.3,370.1 436.3,366.9 440.4,363.7 444.5,360.5 448.6,357.3 452.6,354.1 456.7,350.9 460.8,347.6 464.9,344.4 468.9,341.2 473.0,338.0 477.1,334.8 481.2,331.6 485.2,328.4 489.3,325.2 493.4,322.0 493.4,322.0 489.3,325.2 485.2,328.4 481.2,331.6 477.1,334.8 473.0,338.0 468.9,341.2 464.9,344.4 460.8,347.6 456.7,350.9 452.6,354.1 448.6,357.3 444.5,360.5 440.4,363.7 437.9,367.2 435.9,370.7 433.9,374.3" fill="#0033dd" stroke="#0033dd" stroke-width="0.6" stroke-linejoin="round"/></g><clipPath id="wingc"><polygon points="535.0,338.0 568.0,333.5 575.0,329.5 590.0,324.2 606.4,319.4 621.0,314.5 601.6,307.2 540.0,322.0"/></clipPath><g clip-path="url(#wingc)"><polygon points="501.8,355.6 527.7,348.2 571.7,314.2 545.8,321.6" fill="#aaee00" stroke="#aaee00" stroke-width="0.5" stroke-linejoin="round"/><polygon points="527.7,348.2 544.7,343.4 588.7,309.4 571.7,314.2" fill="#eeee00" stroke="#eeee00" stroke-width="0.5" stroke-linejoin="round"/><polygon points="544.7,343.4 558.5,339.5 602.5,305.5 588.7,309.4" fill="#eebb00" stroke="#eebb00" stroke-width="0.5" stroke-linejoin="round"/><polygon points="558.5,339.5 573.1,335.4 617.1,301.4 602.5,305.5" fill="#ee8800" stroke="#ee8800" stroke-width="0.5" stroke-linejoin="round"/><polygon points="573.1,335.4 584.4,332.1 628.4,298.1 617.1,301.4" fill="#ee4400" stroke="#ee4400" stroke-width="0.5" stroke-linejoin="round"/><polygon points="584.4,332.1 623.3,321.1 667.3,287.1 628.4,298.1" fill="#ee1111" stroke="#ee1111" stroke-width="0.5" stroke-linejoin="round"/></g><path d="M434.7 368.2 L529.3 384.2 M449.1 356.9 L543.6 373.0 M463.4 345.6 L557.9 361.9 M477.8 334.3 L572.2 350.7 M451.8 377.3 L517.0 326.1 M498.2 385.1 L563.3 334.2" fill="none" stroke="#15150f" stroke-width="1.05" stroke-linejoin="round" stroke-linecap="round"/><path d="M553.0 336.5 L563.0 320.0 M585.0 326.0 L580.0 314.0 M545.0 331.0 L600.0 314.0" fill="none" stroke="#15150f" stroke-width="0.8" stroke-linejoin="round" stroke-linecap="round"/><polyline points="428.2,373.3 522.8,389.3 587.8,338.5 568.0,333.5 575.0,329.5 590.0,324.2 606.4,319.4 621.0,314.5 601.6,307.2" fill="none" stroke="#725238" stroke-width="1.8" stroke-linejoin="round"/><polyline points="428.2,373.3 493.4,322.0" fill="none" stroke="#725238" stroke-width="1.8" stroke-linejoin="round"/><polygon points="128.0,298.5 134.0,220.8 224.0,153.0 216.0,231.0" fill="#98987f"/><clipPath id="lwc"><polygon points="128.0,298.5 134.0,220.8 224.0,153.0 216.0,231.0"/></clipPath><g clip-path="url(#lwc)"><path d="M150.6 190.0 L141.7 305.0 M163.4 190.0 L154.5 305.0 M176.6 190.0 L167.7 305.0 M190.5 190.0 L181.6 305.0 M200.5 190.0 L191.6 305.0 M212.0 190.0 L203.1 305.0" fill="none" stroke="#15150f" stroke-width="1.1" stroke-linejoin="round" stroke-linecap="round"/></g><path d="M133.2 231.0 L222.9 163.2 M130.6 264.5 L219.5 196.9" fill="none" stroke="#15150f" stroke-width="1.1" stroke-linejoin="round" stroke-linecap="round"/><polyline points="128.0,298.5 134.0,220.8 157.0,206.0" fill="none" stroke="#725238" stroke-width="2.1" stroke-linejoin="round"/><polygon points="157.0,206.0 180.0,216.8 200.0,225.8 220.0,234.0 240.0,242.2 260.0,249.6 280.0,255.6 300.0,260.0 320.0,263.2 340.0,266.0 360.0,268.4 380.0,270.5 400.0,272.4 420.0,274.3 446.0,276.0 510.0,225.0 480.0,223.3 450.0,221.5 420.0,219.0 400.0,215.5 377.0,210.5 358.0,205.8 340.0,200.5 323.0,194.0 306.0,187.0 289.0,180.0 267.0,171.0 245.0,162.0 223.0,153.0" fill="#98987f"/><clipPath id="deckc"><polygon points="157.0,206.0 180.0,216.8 200.0,225.8 220.0,234.0 240.0,242.2 260.0,249.6 280.0,255.6 300.0,260.0 320.0,263.2 340.0,266.0 360.0,268.4 380.0,270.5 400.0,272.4 420.0,274.3 446.0,276.0 510.0,225.0 480.0,223.3 450.0,221.5 420.0,219.0 400.0,215.5 377.0,210.5 358.0,205.8 340.0,200.5 323.0,194.0 306.0,187.0 289.0,180.0 267.0,171.0 245.0,162.0 223.0,153.0"/></clipPath><g clip-path="url(#deckc)"><path d="M80.4 170.0 L168.4 130.5 M108.6 183.3 L198.1 142.5 M136.8 196.5 L227.3 154.6 M165.0 209.8 L257.0 166.5 M193.2 222.7 L285.7 178.6 M221.4 234.6 L313.4 190.0 M249.6 245.8 L341.1 200.8 M277.8 254.9 L370.8 208.6 M306.0 261.0 L397.5 214.7 M334.2 265.2 L424.2 219.1 M362.4 268.7 L452.9 221.7 M390.6 271.5 L482.1 223.3 M418.8 274.2 L511.3 224.8 M447.0 276.1 L538.5 226.6 M475.2 277.9 L566.2 228.1 M503.4 279.8 L593.9 229.6 M150.8 138.4 L180.2 150.6 L209.2 163.0 L238.6 175.2 L267.2 187.4 L295.0 198.9 L322.8 209.8 L352.2 217.9 L379.2 224.0 L406.2 228.3 L434.8 231.1 L463.8 233.0 L492.8 234.7 L520.2 236.5 L548.0 238.0 L575.8 239.6 M133.2 146.3 L162.3 158.8 L191.1 171.4 L220.2 183.8 L248.7 196.3 L276.6 207.9 L304.5 218.8 L333.6 227.1 L360.9 233.2 L388.2 237.5 L416.7 240.5 L445.5 242.6 L474.3 244.6 L501.9 246.4 L529.8 248.0 L557.7 249.6 M115.6 154.2 L144.4 167.0 L173.0 179.8 L201.8 192.5 L230.2 205.1 L258.2 216.8 L286.2 227.8 L315.0 236.4 L342.6 242.5 L370.2 246.7 L398.6 249.9 L427.2 252.2 L455.8 254.4 L483.6 256.3 L511.6 258.0 L539.6 259.7 M98.0 162.1 L126.5 175.1 L154.9 188.1 L183.4 201.1 L211.7 213.9 L239.8 225.7 L267.9 236.8 L296.4 245.7 L324.3 251.7 L352.2 256.0 L380.5 259.3 L408.9 261.9 L437.3 264.3 L465.3 266.2 L493.4 267.9 L521.5 269.7" fill="none" stroke="#15150f" stroke-width="1.1" stroke-linejoin="round" stroke-linecap="round"/></g><polyline points="136.0,217.5 158.5,200.5 215.0,156.2" fill="none" stroke="#ffffff" stroke-width="2.8" stroke-linejoin="round" stroke-linecap="butt"/><polyline points="158.0,205.0 223.0,153.2" fill="none" stroke="#15150f" stroke-width="1.4" stroke-linejoin="round"/><polyline points="157.0,206.0 180.0,216.8 200.0,225.8 220.0,234.0 240.0,242.2 260.0,249.6 280.0,255.6 300.0,260.0 320.0,263.2 340.0,266.0 360.0,268.4 380.0,270.5 400.0,272.4 420.0,274.3 446.0,276.0" fill="none" stroke="#725238" stroke-width="2.1" stroke-linejoin="round"/><polygon points="289.5,180.2 308.0,182.2 303.0,186.8" fill="#f2c200"/><polygon points="231.0,156.8 290.0,139.0 289.0,179.8" fill="#98987f"/><path d="M244.2 152.8 L244.2 161.0 M258.8 148.5 L258.8 168.0 M274.3 143.8 L274.3 174.0 M262.0 168.0 L289.0 150.3" fill="none" stroke="#15150f" stroke-width="0.9" stroke-linejoin="round" stroke-linecap="round"/><polyline points="289.6,139.5 289.2,180.0" fill="none" stroke="#15150f" stroke-width="1.6" stroke-linejoin="round"/><polygon points="446.0,276.0 510.0,225.0 531.0,248.5 467.0,300.0" fill="#98987f"/><path d="M462.0 263.2 L483.0 287.1 M478.0 250.5 L499.0 274.2 M494.0 237.8 L515.0 261.4 M510.0 225.0 L531.0 248.5 M467.0 300.0 L531.0 248.5 M469.5 302.0 L533.0 250.5 M446.0 276.0 L510.0 225.0" fill="none" stroke="#15150f" stroke-width="1.1" stroke-linejoin="round" stroke-linecap="round"/><polygon points="467.0,300.0 531.0,248.5 541.0,330.0 475.0,381.0" fill="#98987f"/><path d="M473.3 294.9 L479.9 377.2 M487.0 283.9 L495.0 365.5 M501.7 272.1 L509.2 354.6 M516.3 260.3 L523.5 343.5 M468.4 313.8 L532.7 262.4 M471.7 347.8 L536.9 296.6" fill="none" stroke="#15150f" stroke-width="1.1" stroke-linejoin="round" stroke-linecap="round"/><polygon points="531.0,248.5 540.0,245.0 545.0,329.0 541.0,330.0" fill="#98987f"/><path d="M531.0 248.5 L541.0 330.0 M534.0 247.5 L543.5 329.5 M540.0 245.0 L545.0 329.0" fill="none" stroke="#15150f" stroke-width="0.8" stroke-linejoin="round" stroke-linecap="round"/><polygon points="540.0,245.0 595.6,214.4 601.6,307.2 545.0,329.0" fill="#98987f"/><path d="M567.8 229.7 L573.3 318.1 M533.0 265.0 L541.5 257.7 L598.0 240.5 M531.0 300.0 L544.0 291.0 L600.0 274.5 M595.6 214.4 L601.6 307.2 M540.0 245.0 L595.6 214.4" fill="none" stroke="#15150f" stroke-width="1.1" stroke-linejoin="round" stroke-linecap="round"/><polyline points="446.0,276.0 467.0,300.0 469.0,335.0 475.0,381.0" fill="none" stroke="#725238" stroke-width="2.1" stroke-linejoin="round"/><path d="M135.3 296.0 L135.3 218.4 L218.9 147.9 M136.5 221.0 L220.0 150.5 M218.9 147.9 L350.0 179.4 L390.0 187.4 L508.9 217.1 L530.4 247.6 L530.4 323.0 M218.9 147.9 L243.0 152.7 L289.5 139.3 L289.5 179.4 M199.6 160.9 L199.6 238.9 M157.6 199.9 L199.6 209.2 L248.6 221.0 L350.0 244.4 L390.0 254.3 L447.6 269.2 L467.3 295.2 L467.3 372.0 M75.0 280.0 L135.3 227.7 L159.4 234.4 L246.7 177.6 L285.7 180.2 L289.5 179.4 M75.0 280.0 L132.0 295.5 L163.0 305.0 L241.0 247.0 L267.0 223.0 L306.2 186.9 L289.5 179.4 M132.0 295.5 L208.0 239.0 L289.5 179.4 M508.9 217.1 L447.6 269.2 M467.3 295.2 L530.4 247.6 L537.8 239.4 L592.5 212.7 L592.5 304.0 M537.8 239.4 L537.8 317.4 M421.0 364.0 L484.0 313.2 L562.7 292.0 L592.5 304.0 M421.0 364.0 L524.2 386.7 L582.0 337.7 L559.2 332.5 L564.5 325.5 L592.5 304.0 M466.5 371.7 L531.2 318.5 L538.2 316.7 L592.5 304.0" fill="none" stroke="#1f48dc" stroke-width="0.9" stroke-linejoin="round" stroke-linecap="round"/><polyline points="40.0,378.6 60.0,369.0 87.0,375.9" fill="none" stroke="#e2a566" stroke-width="1.9" stroke-linejoin="round"/><polygon points="38.2,379.5 50.5,371.6 52.3,377.2" fill="#e2a566"/><polygon points="89.3,376.5 77.2,371.6 76.0,376.6" fill="#e2a566"/><text x="30.500" y="384" font-family="Liberation Mono,monospace" font-size="8" font-weight="bold" fill="#4a3010">Y</text><text x="92" y="379.800" font-family="Liberation Mono,monospace" font-size="8" font-weight="bold" fill="#4a3010">X</text></g></svg><div class="abs" style="left:24px;top:395px;width:651px;height:13px;background:#fcfcfa"></div><div class="abs" style="left:662px;top:66px;width:13px;height:342px;background:#fcfcfa"></div><svg class="abs" style="left:0;top:0" width="686" height="431" viewBox="0 0 686 431"><path d="M24 394.800 H661.500" stroke="#666" stroke-width="0.800" fill="none"/><path d="M661.300 395 V66" stroke="#333" stroke-width="1" fill="none"/><path d="M37.7 394.500 V397.8 M55.2 394.500 V396.3 M72.8 394.500 V396.3 M90.3 394.500 V396.3 M107.8 394.500 V396.3 M125.3 394.500 V397.8 M142.9 394.500 V396.3 M160.4 394.500 V396.3 M177.9 394.500 V396.3 M195.4 394.500 V396.3 M213.0 394.500 V397.8 M230.5 394.500 V396.3 M248.0 394.500 V396.3 M265.5 394.500 V396.3 M283.1 394.500 V396.3 M300.6 394.500 V397.8 M318.1 394.500 V396.3 M335.6 394.500 V396.3 M353.2 394.500 V396.3 M370.7 394.500 V396.3 M388.2 394.500 V397.8 M405.7 394.500 V396.3 M423.3 394.500 V396.3 M440.8 394.500 V396.3 M458.3 394.500 V396.3 M475.8 394.500 V397.8 M493.4 394.500 V396.3 M510.9 394.500 V396.3 M528.4 394.500 V396.3 M546.0 394.500 V396.3 M563.5 394.500 V397.8 M581.0 394.500 V396.3 M598.5 394.500 V396.3 M616.1 394.500 V396.3 M633.6 394.500 V396.3 M651.1 394.500 V397.8 M661.500 69.8 H663.0 M661.500 87.3 H663.0 M661.500 104.8 H663.0 M661.500 122.3 H663.0 M661.500 139.9 H664.5 M661.500 157.4 H663.0 M661.500 174.9 H663.0 M661.500 192.4 H663.0 M661.500 210.0 H663.0 M661.500 227.5 H664.5 M661.500 245.0 H663.0 M661.500 262.6 H663.0 M661.500 280.1 H663.0 M661.500 297.6 H663.0 M661.500 315.1 H664.5 M661.500 332.7 H663.0 M661.500 350.2 H663.0 M661.500 367.7 H663.0 M661.500 385.2 H663.0 " stroke="#1a1a1a" stroke-width="1" fill="none"/><text x="36.6" y="404" font-family="Liberation Mono,monospace" font-size="7.500" fill="#333" text-anchor="middle" letter-spacing="-0.200">-20</text><text x="124.2" y="404" font-family="Liberation Mono,monospace" font-size="7.500" fill="#333" text-anchor="middle" letter-spacing="-0.200">-15</text><text x="211.9" y="404" font-family="Liberation Mono,monospace" font-size="7.500" fill="#333" text-anchor="middle" letter-spacing="-0.200">-10</text><text x="299.5" y="404" font-family="Liberation Mono,monospace" font-size="7.500" fill="#333" text-anchor="middle" letter-spacing="-0.200">-5</text><text x="388.1" y="404" font-family="Liberation Mono,monospace" font-size="7.500" fill="#333" text-anchor="middle" letter-spacing="-0.200">0</text><text x="475.8" y="404" font-family="Liberation Mono,monospace" font-size="7.500" fill="#333" text-anchor="middle" letter-spacing="-0.200">5</text><text x="563.4" y="404" font-family="Liberation Mono,monospace" font-size="7.500" fill="#333" text-anchor="middle" letter-spacing="-0.200">10</text><text x="651.0" y="404" font-family="Liberation Mono,monospace" font-size="7.500" fill="#333" text-anchor="middle" letter-spacing="-0.200">15</text><text transform="translate(671,139.9) rotate(-90)" font-family="Liberation Mono,monospace" font-size="7" fill="#333" text-anchor="middle">-5</text><text transform="translate(671,227.5) rotate(-90)" font-family="Liberation Mono,monospace" font-size="7" fill="#333" text-anchor="middle">0</text><text transform="translate(671,315.1) rotate(-90)" font-family="Liberation Mono,monospace" font-size="7" fill="#333" text-anchor="middle">5</text></svg><div class="abs" style="left:24px;top:408px;width:650px;height:10px;background:#e2e2e2"></div><div class="abs" style="left:24px;top:418px;width:662px;height:2px;background:#c8c8c8"></div><div class="btn" style="left:24px;top:408px;width:9px;height:10px;background:#e8e8e8;box-shadow:none"></div><div class="tri-l" style="left:26px;top:410px"></div><div class="abs" style="left:33px;top:411.500px;width:57px;height:3px;background:#aaa;border-top:1px solid #808080"></div><div class="abs" style="left:90px;top:408px;width:522px;height:10px;background:#e9e9e9;border:1px solid;border-color:#fff #8a8a8a #8a8a8a #fff"></div><div class="abs" style="left:612px;top:411.500px;width:52px;height:3px;background:#aaa;border-top:1px solid #808080"></div><div class="btn" style="left:664px;top:408px;width:9px;height:10px;background:#e8e8e8;box-shadow:none"></div><div class="tri-r" style="left:667px;top:410px"></div><div class="abs" style="left:675px;top:64px;width:11px;height:344px;background:#d8d8d8"></div><div class="abs" style="left:675.500px;top:66px;width:9px;height:342px;background:#e2e2e2"></div><div class="btn" style="left:675px;top:66.500px;width:9px;height:8.500px;background:#e8e8e8;box-shadow:none"></div><div class="tri-u" style="left:676.500px;top:68px"></div><div class="abs" style="left:678px;top:75px;width:3.500px;height:25px;background:#aaa;border-left:1px solid #808080"></div><div class="abs" style="left:675px;top:100px;width:9px;height:207px;background:#e9e9e9;border:1px solid;border-color:#fff #8a8a8a #8a8a8a #fff"></div><div class="abs" style="left:678px;top:307px;width:3.500px;height:90px;background:#aaa;border-left:1px solid #808080"></div><div class="btn" style="left:675px;top:397px;width:9px;height:9px;background:#e8e8e8;box-shadow:none"></div><div class="tri-d" style="left:676.500px;top:400px"></div><div class="abs" style="left:0;top:420px;width:686px;height:11px;background:#d2d2d2"></div><div class="abs" style="left:2.5px;top:420px;width:166px;height:8.500px;border:1px solid;border-color:#777 #f4f4f4 #f4f4f4 #777;background:#d6d6d6"></div><div class="abs" style="left:4.00px;top:419.35px;font-family:'Liberation Sans',sans-serif;font-weight:normal;font-size:7.3px;line-height:9.3px;letter-spacing:-0.109px;color:#111;white-space:pre;">Vorstatik-Räumlich</div><div class="abs" style="left:170px;top:420px;width:166px;height:8.500px;border:1px solid;border-color:#777 #f4f4f4 #f4f4f4 #777;background:#d6d6d6"></div><div class="abs" style="left:171.50px;top:419.35px;font-family:'Liberation Sans',sans-serif;font-weight:normal;font-size:7.3px;line-height:9.3px;letter-spacing:-0.387px;color:#111;white-space:pre;">3D-System</div><div class="abs" style="left:338px;top:420px;width:166px;height:8.500px;border:1px solid;border-color:#777 #f4f4f4 #f4f4f4 #777;background:#d6d6d6"></div><div class="abs" style="left:339.50px;top:419.35px;font-family:'Liberation Sans',sans-serif;font-weight:normal;font-size:7.3px;line-height:9.3px;letter-spacing:0.198px;color:#111;white-space:pre;">Lastfall 1</div><div class="abs" style="left:506px;top:420px;width:166px;height:8.500px;border:1px solid;border-color:#777 #f4f4f4 #f4f4f4 #777;background:#d6d6d6"></div><div class="abs" style="left:507.50px;top:419.35px;font-family:'Liberation Sans',sans-serif;font-weight:normal;font-size:7.3px;line-height:9.3px;letter-spacing:-0.005px;color:#111;white-space:pre;">g-Konstruktion</div><div class="abs" style="left:674px;top:420px;width:10px;height:9px;border:1px solid;border-color:#777 #f4f4f4 #f4f4f4 #777;background:#dcdcdc"></div><div class="abs" style="left:677.500px;top:421.500px;width:3px;height:3px;border-radius:2px;background:#e02020"></div><div class="abs" style="left:677.500px;top:424.500px;width:3px;height:3px;border-radius:2px;background:#2040e0"></div><div class="panel" style="left:26.500px;top:78px;width:96px;height:157.500px"></div><div class="abs" style="left:27.500px;top:79px;width:94px;height:8px;background:#9cb4d6"></div><svg class="abs" style="left:28.5px;top:79px" width="8" height="8" viewBox="0 0 8 8"><rect x="0.500" y="0.500" width="4" height="4" fill="#e0d000" stroke="#3a3a10" stroke-width="0.600"/><rect x="3.200" y="3.200" width="4.300" height="4.300" fill="#10b010" stroke="#103a10" stroke-width="0.600"/></svg><div class="abs" style="left:37.30px;top:78.85px;font-family:'Liberation Sans',sans-serif;font-weight:normal;font-size:6.3px;line-height:8.3px;letter-spacing:-0.522px;color:#fff;white-space:pre;">KONTUREN</div><div class="dd" style="left:115px;top:79.500px;width:7px;height:7px;background:#d8d8d8"></div><div class="tri-d" style="left:116.500px;top:82px;border-left-width:2px;border-right-width:2px;border-top-width:2.500px"></div><div class="fld" style="left:32.500px;top:89.500px;width:74.500px;height:13.500px"></div><div class="abs" style="left:37.80px;top:91.15px;font-family:'Liberation Sans',sans-serif;font-weight:normal;font-size:8.3px;line-height:10.3px;letter-spacing:-0.544px;color:#222;white-space:pre;">σbz</div><div class="dd" style="left:96.500px;top:92px;width:9px;height:9px"></div><div class="tri-d" style="left:98px;top:95px"></div><div class="abs" style="left:108.2px;top:88.7px;width:8.600px;height:14px;background:#e2e2e2;border:1px solid;border-color:#f8f8f8 #999 #999 #f8f8f8"></div><div class="tri-u" style="left:109px;top:91px;border-left-width:3.500px;border-right-width:3.500px;border-bottom-width:4px"></div><div class="abs" style="left:109px;top:95.8px;width:7px;height:1px;background:#111"></div><div class="tri-d" style="left:109px;top:98px;border-left-width:3.500px;border-right-width:3.500px;border-top-width:4px"></div><div class="abs" style="left:34.30px;top:106.50px;font-family:'Liberation Sans',sans-serif;font-weight:normal;font-size:8.6px;line-height:10.6px;letter-spacing:0.414px;color:#222;white-space:pre;">kN/m2</div><svg class="abs" style="left:101.5px;top:104.8px" width="17" height="15" viewBox="0 0 17 15">
<rect x="0.500" y="0.500" width="15" height="13" rx="3" fill="#f0f0f0" stroke="#aaa" stroke-width="1"/><path d="M3 14 H13 Q15.500 14 15.500 11.500 V3" stroke="#555" stroke-width="1" fill="none"/>
<path d="M3.500 8.500 C4 4.500 9 3.500 12 6.500" stroke="#111" stroke-width="1.600" fill="none"/><path d="M13.800 8.800 L9.300 7.800 L12.500 3.800 Z" fill="#111"/>
<path d="M3.500 11 H5 M7 11 H8.500 M10.500 11 H12" stroke="#111" stroke-width="1.300"/></svg><div class="abs" style="left:32px;top:120.800px;width:86.500px;height:96px;background:#fffcf2;border:1px solid;border-color:#8a8a8a #fff #fff #8a8a8a"></div><div class="abs" style="left:36px;top:125.00px;width:10.500px;height:6.700px;background:#ee1111"></div><div class="abs" style="left:51.50px;top:127.95px;font-family:'Liberation Mono',monospace;font-weight:normal;font-size:7.5px;line-height:9.5px;letter-spacing:-0.001px;color:#666;white-space:pre;"> -0.897</div><div class="abs" style="left:36px;top:132.92px;width:10.500px;height:6.700px;background:#ee5500"></div><div class="abs" style="left:51.50px;top:136.07px;font-family:'Liberation Mono',monospace;font-weight:normal;font-size:7.5px;line-height:9.5px;letter-spacing:-0.001px;color:#666;white-space:pre;"> 17.439</div><div class="abs" style="left:36px;top:140.84px;width:10.500px;height:6.700px;background:#ee9900"></div><div class="abs" style="left:51.50px;top:144.19px;font-family:'Liberation Mono',monospace;font-weight:normal;font-size:7.5px;line-height:9.5px;letter-spacing:-0.001px;color:#666;white-space:pre;"> 35.775</div><div class="abs" style="left:36px;top:148.76px;width:10.500px;height:6.700px;background:#eecc00"></div><div class="abs" style="left:51.50px;top:152.31px;font-family:'Liberation Mono',monospace;font-weight:normal;font-size:7.5px;line-height:9.5px;letter-spacing:-0.001px;color:#666;white-space:pre;"> 54.111</div><div class="abs" style="left:36px;top:156.68px;width:10.500px;height:6.700px;background:#eeee00"></div><div class="abs" style="left:51.50px;top:160.43px;font-family:'Liberation Mono',monospace;font-weight:normal;font-size:7.5px;line-height:9.5px;letter-spacing:-0.001px;color:#666;white-space:pre;"> 72.447</div><div class="abs" style="left:36px;top:164.60px;width:10.500px;height:6.700px;background:#aaee00"></div><div class="abs" style="left:51.50px;top:168.55px;font-family:'Liberation Mono',monospace;font-weight:normal;font-size:7.5px;line-height:9.5px;letter-spacing:-0.001px;color:#666;white-space:pre;"> 90.782</div><div class="abs" style="left:36px;top:172.52px;width:10.500px;height:6.700px;background:#55dd11"></div><div class="abs" style="left:51.50px;top:176.67px;font-family:'Liberation Mono',monospace;font-weight:normal;font-size:7.5px;line-height:9.5px;letter-spacing:-0.001px;color:#666;white-space:pre;">109.118</div><div class="abs" style="left:36px;top:180.44px;width:10.500px;height:6.700px;background:#33cc66"></div><div class="abs" style="left:51.50px;top:184.79px;font-family:'Liberation Mono',monospace;font-weight:normal;font-size:7.5px;line-height:9.5px;letter-spacing:-0.001px;color:#666;white-space:pre;">127.454</div><div class="abs" style="left:36px;top:188.36px;width:10.500px;height:6.700px;background:#00bbbb"></div><div class="abs" style="left:51.50px;top:192.91px;font-family:'Liberation Mono',monospace;font-weight:normal;font-size:7.5px;line-height:9.5px;letter-spacing:-0.001px;color:#666;white-space:pre;">145.790</div><div class="abs" style="left:36px;top:196.28px;width:10.500px;height:6.700px;background:#0077cc"></div><div class="abs" style="left:51.50px;top:201.03px;font-family:'Liberation Mono',monospace;font-weight:normal;font-size:7.5px;line-height:9.5px;letter-spacing:-0.001px;color:#666;white-space:pre;">164.126</div><div class="abs" style="left:36px;top:204.20px;width:10.500px;height:6.700px;background:#0033dd"></div><div class="abs" style="left:34.00px;top:218.45px;font-family:'Liberation Mono',monospace;font-weight:normal;font-size:7.5px;line-height:9.5px;letter-spacing:-0.619px;color:#111;white-space:pre;">Min: -35.531</div><div class="abs" style="left:34.00px;top:226.95px;font-family:'Liberation Mono',monospace;font-weight:normal;font-size:7.5px;line-height:9.5px;letter-spacing:-0.619px;color:#111;white-space:pre;">Max: 214.040</div><div class="panel" style="left:388.500px;top:79.500px;width:93.500px;height:102px"></div><div class="abs" style="left:389.500px;top:80.500px;width:91.500px;height:8px;background:#9cb4d6"></div><svg class="abs" style="left:390.5px;top:80.5px" width="8" height="8" viewBox="0 0 8 8"><rect x="0.500" y="0.500" width="4" height="4" fill="#e0d000" stroke="#3a3a10" stroke-width="0.600"/><rect x="3.200" y="3.200" width="4.300" height="4.300" fill="#10b010" stroke="#103a10" stroke-width="0.600"/></svg><div class="abs" style="left:400.30px;top:80.85px;font-family:'Liberation Sans',sans-serif;font-weight:normal;font-size:6.3px;line-height:8.3px;letter-spacing:-0.378px;color:#fff;white-space:pre;">DEFORMATION</div><div class="dd" style="left:473.500px;top:81.500px;width:7px;height:7px;background:#d8d8d8"></div><div class="tri-d" style="left:475px;top:84px;border-left-width:2px;border-right-width:2px;border-top-width:2.500px"></div><div class="fld" style="left:395px;top:92px;width:69.500px;height:13px"></div><div class="abs" style="left:400.90px;top:93.45px;font-family:'Liberation Sans',sans-serif;font-weight:normal;font-size:8.3px;line-height:10.3px;letter-spacing:0.181px;color:#222;white-space:pre;">uX,uY,uZ</div><div class="dd" style="left:455px;top:94px;width:9px;height:9px"></div><div class="tri-d" style="left:456.500px;top:97px"></div><div class="abs" style="left:466.2px;top:90.7px;width:8.600px;height:14px;background:#e2e2e2;border:1px solid;border-color:#f8f8f8 #999 #999 #f8f8f8"></div><div class="tri-u" style="left:467px;top:93px;border-left-width:3.500px;border-right-width:3.500px;border-bottom-width:4px"></div><div class="abs" style="left:467px;top:97.8px;width:7px;height:1px;background:#111"></div><div class="tri-d" style="left:467px;top:100px;border-left-width:3.500px;border-right-width:3.500px;border-top-width:4px"></div><svg class="abs" style="left:459.7px;top:107px" width="17" height="15" viewBox="0 0 17 15">
<rect x="0.500" y="0.500" width="15" height="13" rx="3" fill="#f0f0f0" stroke="#aaa" stroke-width="1"/><path d="M3 14 H13 Q15.500 14 15.500 11.500 V3" stroke="#555" stroke-width="1" fill="none"/>
<path d="M3.500 8.500 C4 4.500 9 3.500 12 6.500" stroke="#111" stroke-width="1.600" fill="none"/><path d="M13.800 8.800 L9.300 7.800 L12.500 3.800 Z" fill="#111"/>
<path d="M3.500 11 H5 M7 11 H8.500 M10.500 11 H12" stroke="#111" stroke-width="1.300"/></svg><div class="abs" style="left:397.30px;top:110.95px;font-family:'Liberation Mono',monospace;font-weight:normal;font-size:7.5px;line-height:9.5px;letter-spacing:-0.611px;color:#111;white-space:pre;">Faktor: 80.</div><div class="abs" style="left:397.30px;top:123.35px;font-family:'Liberation Mono',monospace;font-weight:normal;font-size:7.3px;line-height:9.3px;letter-spacing:-0.479px;color:#111;white-space:pre;">uX: Min/Max:</div><div class="abs" style="left:400.90px;top:132.85px;font-family:'Liberation Mono',monospace;font-weight:normal;font-size:7.3px;line-height:9.3px;letter-spacing:-0.380px;color:#111;white-space:pre;">-8.807/9.118 mm</div><div class="abs" style="left:397.30px;top:142.55px;font-family:'Liberation Mono',monospace;font-weight:normal;font-size:7.3px;line-height:9.3px;letter-spacing:-0.479px;color:#111;white-space:pre;">uY: Min/Max:</div><div class="abs" style="left:400.90px;top:152.05px;font-family:'Liberation Mono',monospace;font-weight:normal;font-size:7.3px;line-height:9.3px;letter-spacing:-0.380px;color:#111;white-space:pre;">-3.848/2.381 mm</div><div class="abs" style="left:397.30px;top:162.35px;font-family:'Liberation Mono',monospace;font-weight:normal;font-size:7.3px;line-height:9.3px;letter-spacing:-0.479px;color:#111;white-space:pre;">uZ: Min/Max:</div><div class="abs" style="left:400.90px;top:171.45px;font-family:'Liberation Mono',monospace;font-weight:normal;font-size:7.3px;line-height:9.3px;letter-spacing:-0.405px;color:#111;white-space:pre;">-1.184/21. mm</div><div class="abs" style="left:0;top:0;width:1px;height:431px;background:#333"></div><div class="abs" style="left:685px;top:0;width:1px;height:431px;background:#222"></div><div class="abs" style="left:0;top:430px;width:686px;height:1px;background:#222"></div><div class="abs" style="left:0;top:0;width:686px;height:1px;background:#222"></div></div></body></html>
